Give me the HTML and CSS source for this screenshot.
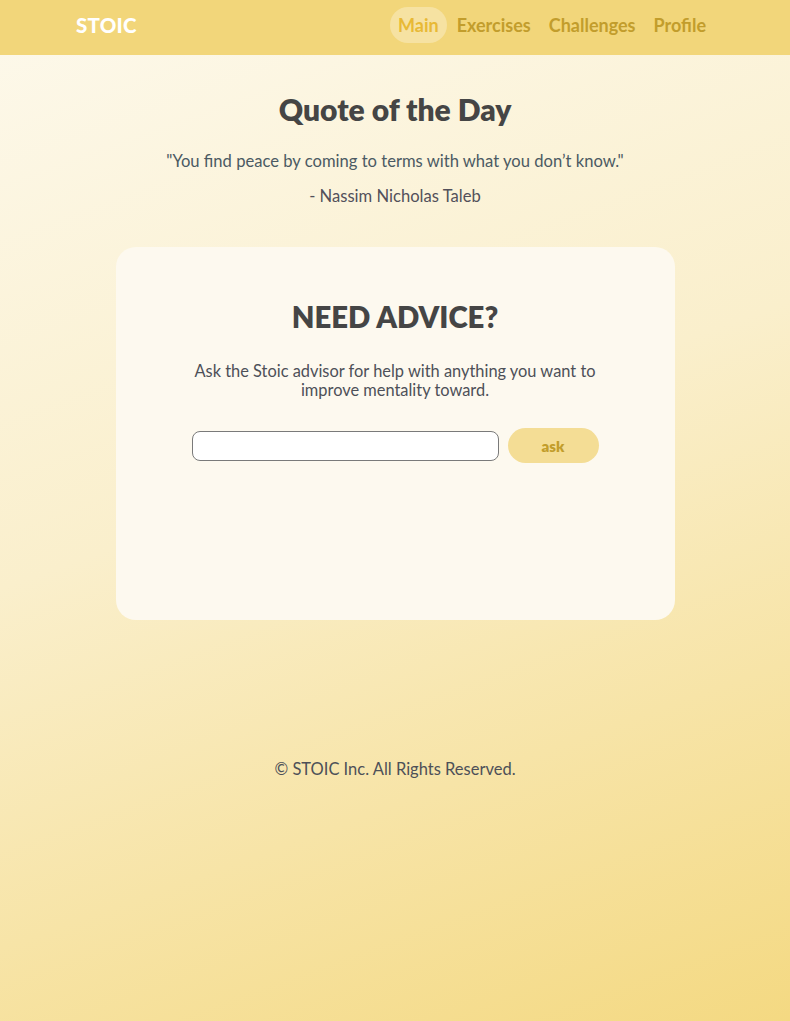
FILE: index.html
```html
<!DOCTYPE html>
<html lang="en">
<head>
<meta charset="utf-8">
<title>STOIC</title>
<link rel="stylesheet" href="styles.css">
</head>
<body>
<header class="topbar">
  <div class="brand">STOIC</div>
  <nav class="nav">
    <a class="nav-link active">Main</a>
    <a class="nav-link">Exercises</a>
    <a class="nav-link">Challenges</a>
    <a class="nav-link">Profile</a>
  </nav>
</header>
<main class="content">
  <section class="quote">
    <h1 class="quote-title">Quote of the Day</h1>
    <p class="quote-text">"You find peace by coming to terms with what you don’t know."</p>
    <p class="quote-author">- Nassim Nicholas Taleb</p>
  </section>
  <section class="card">
    <h2 class="card-title">NEED ADVICE?</h2>
    <p class="card-text">Ask the Stoic advisor for help with anything you want to improve mentality toward.</p>
    <form class="ask-form">
      <input class="ask-input" type="text">
      <button class="ask-btn" type="button">ask</button>
    </form>
  </section>
  <footer class="footer">© STOIC Inc. All Rights Reserved.</footer>
</main>
</body>
</html>
```

FILE: styles.css
```css
html, body {
  margin: 0;
  padding: 0;
}
body {
  min-height: 1021px;
  font-family: Lato, "Open Sans", sans-serif;
  color: #4a4a4a;
  background: linear-gradient(160deg, #fdf9ec 0%, #faefcc 45%, #f4d982 100%);
}
.topbar {
  height: 55px;
  box-sizing: border-box;
  padding: 0 84px 6px 76px;
  background: #f2d67a;
  display: flex;
  align-items: center;
  justify-content: space-between;
}
.brand {
  color: #fff;
  font-weight: 900;
  font-size: 20.5px;
  letter-spacing: 0.2px;
}
.nav {
  display: flex;
  align-items: center;
  gap: 2px;
}
.nav-link {
  font-weight: 700;
  font-size: 18px;
  color: #c29d2c;
  padding: 7px 8px;
  border-radius: 18px;
}
.nav-link:last-child {
  padding-right: 0;
}
.nav-link.active {
  background: #f6e2a2;
  color: #e8b935;
}
.content {
  display: flex;
  flex-direction: column;
  align-items: center;
}
.quote {
  text-align: center;
  padding-top: 36px;
}
.quote-title {
  margin: 0;
  font-size: 30px;
  font-weight: 800;
  color: #454545;
  line-height: 36px;
}
.quote-text {
  margin: 23px 0 0;
  font-size: 16.6px;
  line-height: 22px;
  color: #4b5a63;
}
.quote-author {
  margin: 13px 0 0;
  font-size: 16.6px;
  line-height: 22px;
  color: #52505a;
}
.card {
  margin-top: 40px;
  width: 559px;
  height: 373px;
  box-sizing: border-box;
  background: #fdf9ef;
  border-radius: 20px;
  display: flex;
  flex-direction: column;
  align-items: center;
  padding-top: 52px;
}
.card-title {
  margin: 0;
  font-size: 29.3px;
  font-weight: 800;
  color: #454545;
  line-height: 36px;
}
.card-text {
  margin: 26px 0 0;
  width: 420px;
  text-align: center;
  font-size: 16.4px;
  line-height: 19px;
  color: #4d5058;
}
.ask-form {
  margin-top: 29px;
  display: flex;
  align-items: center;
  gap: 9px;
}
.ask-input {
  width: 307px;
  height: 30px;
  box-sizing: border-box;
  border: 1px solid #7a7a7a;
  border-radius: 8px;
  background: #fff;
}
.ask-btn {
  width: 91px;
  height: 35px;
  border: none;
  border-radius: 18px;
  background: #f4dd95;
  color: #c29d2c;
  font-family: Lato, "Open Sans", sans-serif;
  font-weight: 800;
  font-size: 15px;
}
.footer {
  margin-top: 138px;
  font-size: 16.5px;
  color: #4d5058;
  line-height: 22px;
}
```
